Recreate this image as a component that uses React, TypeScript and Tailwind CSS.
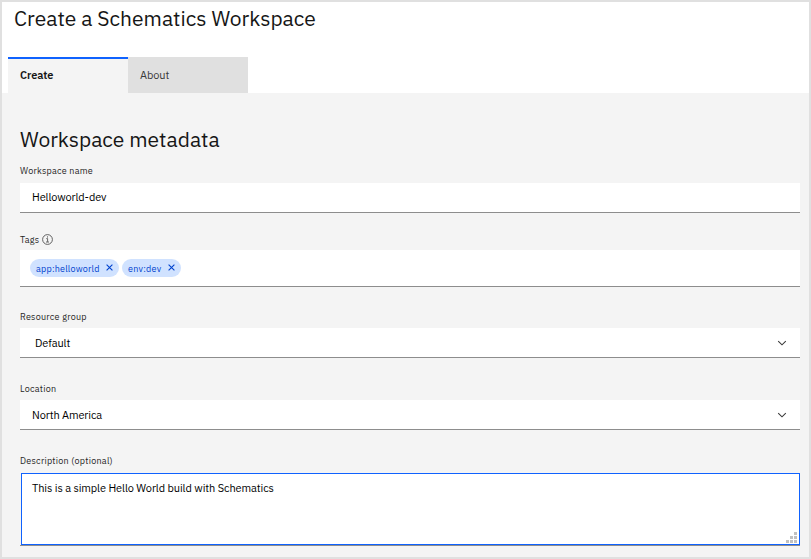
import type { ReactNode } from "react";

function Label({ children }: { children: ReactNode }) {
  return (
    <div className="flex h-3 items-center whitespace-nowrap text-[9px] leading-3 tracking-[0.25px] text-[#262626]">
      {children}
    </div>
  );
}

function Chevron() {
  return (
    <svg className="h-[10px] w-[10px]" viewBox="0 0 10 10" fill="none" stroke="#393939" strokeWidth="1.1">
      <path d="M1.2 3.2 5 6.8l3.8-3.6" />
    </svg>
  );
}

function Tag({ children, className }: { children: ReactNode; className: string }) {
  return (
    <span
      className={`flex h-[18px] items-center justify-between rounded-full bg-[#d0e2ff] pl-[6px] pr-[6px] text-[9px] leading-3 text-[#0043ce] ${className}`}
    >
      <span className="pt-px">{children}</span>
      <svg className="mb-px h-[7px] w-[7px]" viewBox="0 0 7 7" fill="none" stroke="#0043ce" strokeWidth="1.1">
        <path d="M.6.6l5.8 5.8M6.4.6.6 6.4" />
      </svg>
    </span>
  );
}

const grip = [
  [8, 0],
  [4, 4],
  [8, 4],
  [0, 8],
  [4, 8],
  [8, 8],
];

export default function App() {
  return (
    <div className="flex h-[559px] w-[811px] flex-col overflow-hidden border-2 border-[#e0e0e0] bg-white font-['IBM_Plex_Sans','Roboto',sans-serif] text-[#161616]">
      <h1 className="h-[55px] whitespace-nowrap pl-3 pt-[2px] text-[21px] leading-7">
        Create a Schematics Workspace
      </h1>
      <div className="flex h-9 pl-[6px] text-[11px] leading-4 tracking-[-0.1px]">
        <div className="w-[120px] border-t-2 border-[#0f62fe] bg-[#f4f4f4] pl-3 pt-2 font-semibold">Create</div>
        <div className="w-[120px] bg-[#e0e0e0] pl-3 pt-[10px] text-[#393939]">About</div>
      </div>
      <main className="flex flex-1 flex-col bg-[#f4f4f4] pl-[18px] pr-[9px] pt-8">
        <h2 className="h-10 whitespace-nowrap text-[21px] leading-7">Workspace metadata</h2>
        <Label>Workspace name</Label>
        <div className="mt-[6px] h-[30px] border-b border-[#8d8d8d] bg-white pl-3 pt-[6px] text-[11px] leading-4 tracking-[-0.12px] text-black">
          Helloworld-dev
        </div>
        <div className="mt-[21px]">
          <Label>
            Tags
            <svg className="mb-[2px] ml-[3px] h-[11px] w-[11px]" viewBox="0 0 11 11" fill="none" stroke="#525252">
              <circle cx="5.5" cy="5.5" r="4.9" strokeWidth="0.9" />
              <path d="M4.3 4.6h1.3v3.2M4 8h3" strokeWidth="0.9" />
              <path d="M5.5 2.4v1.1" strokeWidth="1.1" />
            </svg>
          </Label>
        </div>
        <div className="mt-1 flex h-[37px] gap-[3px] border-b border-[#8d8d8d] bg-white pl-[10px] pt-[9px]">
          <Tag className="w-[89px] tracking-[0.22px]">app:helloworld</Tag>
          <Tag className="w-[59px] tracking-[0.25px]">env:dev</Tag>
        </div>
        <div className="mt-6">
          <Label>Resource group</Label>
        </div>
        <div className="mt-[5px] flex h-[30px] items-center justify-between border-b border-[#8d8d8d] bg-white pl-[15px] pr-[13px] text-[11px] leading-4 tracking-[-0.1px] text-black">
          Default
          <Chevron />
        </div>
        <div className="mt-[25px]">
          <Label>Location</Label>
        </div>
        <div className="mt-[5px] flex h-[30px] items-center justify-between border-b border-[#8d8d8d] bg-white pl-3 pr-[13px] text-[11px] leading-4 tracking-[-0.12px] text-black">
          North America
          <Chevron />
        </div>
        <div className="mt-[25px]">
          <Label>Description (optional)</Label>
        </div>
        <div className="mt-[6px] border-b border-[#8d8d8d] pl-px">
          <div className="flex h-[72px] justify-between border border-[#0f62fe] bg-white pl-[10px] pr-[2px] text-[11px] leading-4 tracking-[-0.1px] text-black">
            <span className="pt-[6px]">This is a simple Hello World build with Schematics</span>
            <svg className="mb-px h-[11px] w-[11px] self-end" viewBox="0 0 11 11" fill="#c1c1c1">
              {grip.map(([x, y]) => (
                <rect key={`${x}-${y}`} x={x} y={y} width="3" height="3" />
              ))}
            </svg>
          </div>
        </div>
      </main>
    </div>
  );
}
